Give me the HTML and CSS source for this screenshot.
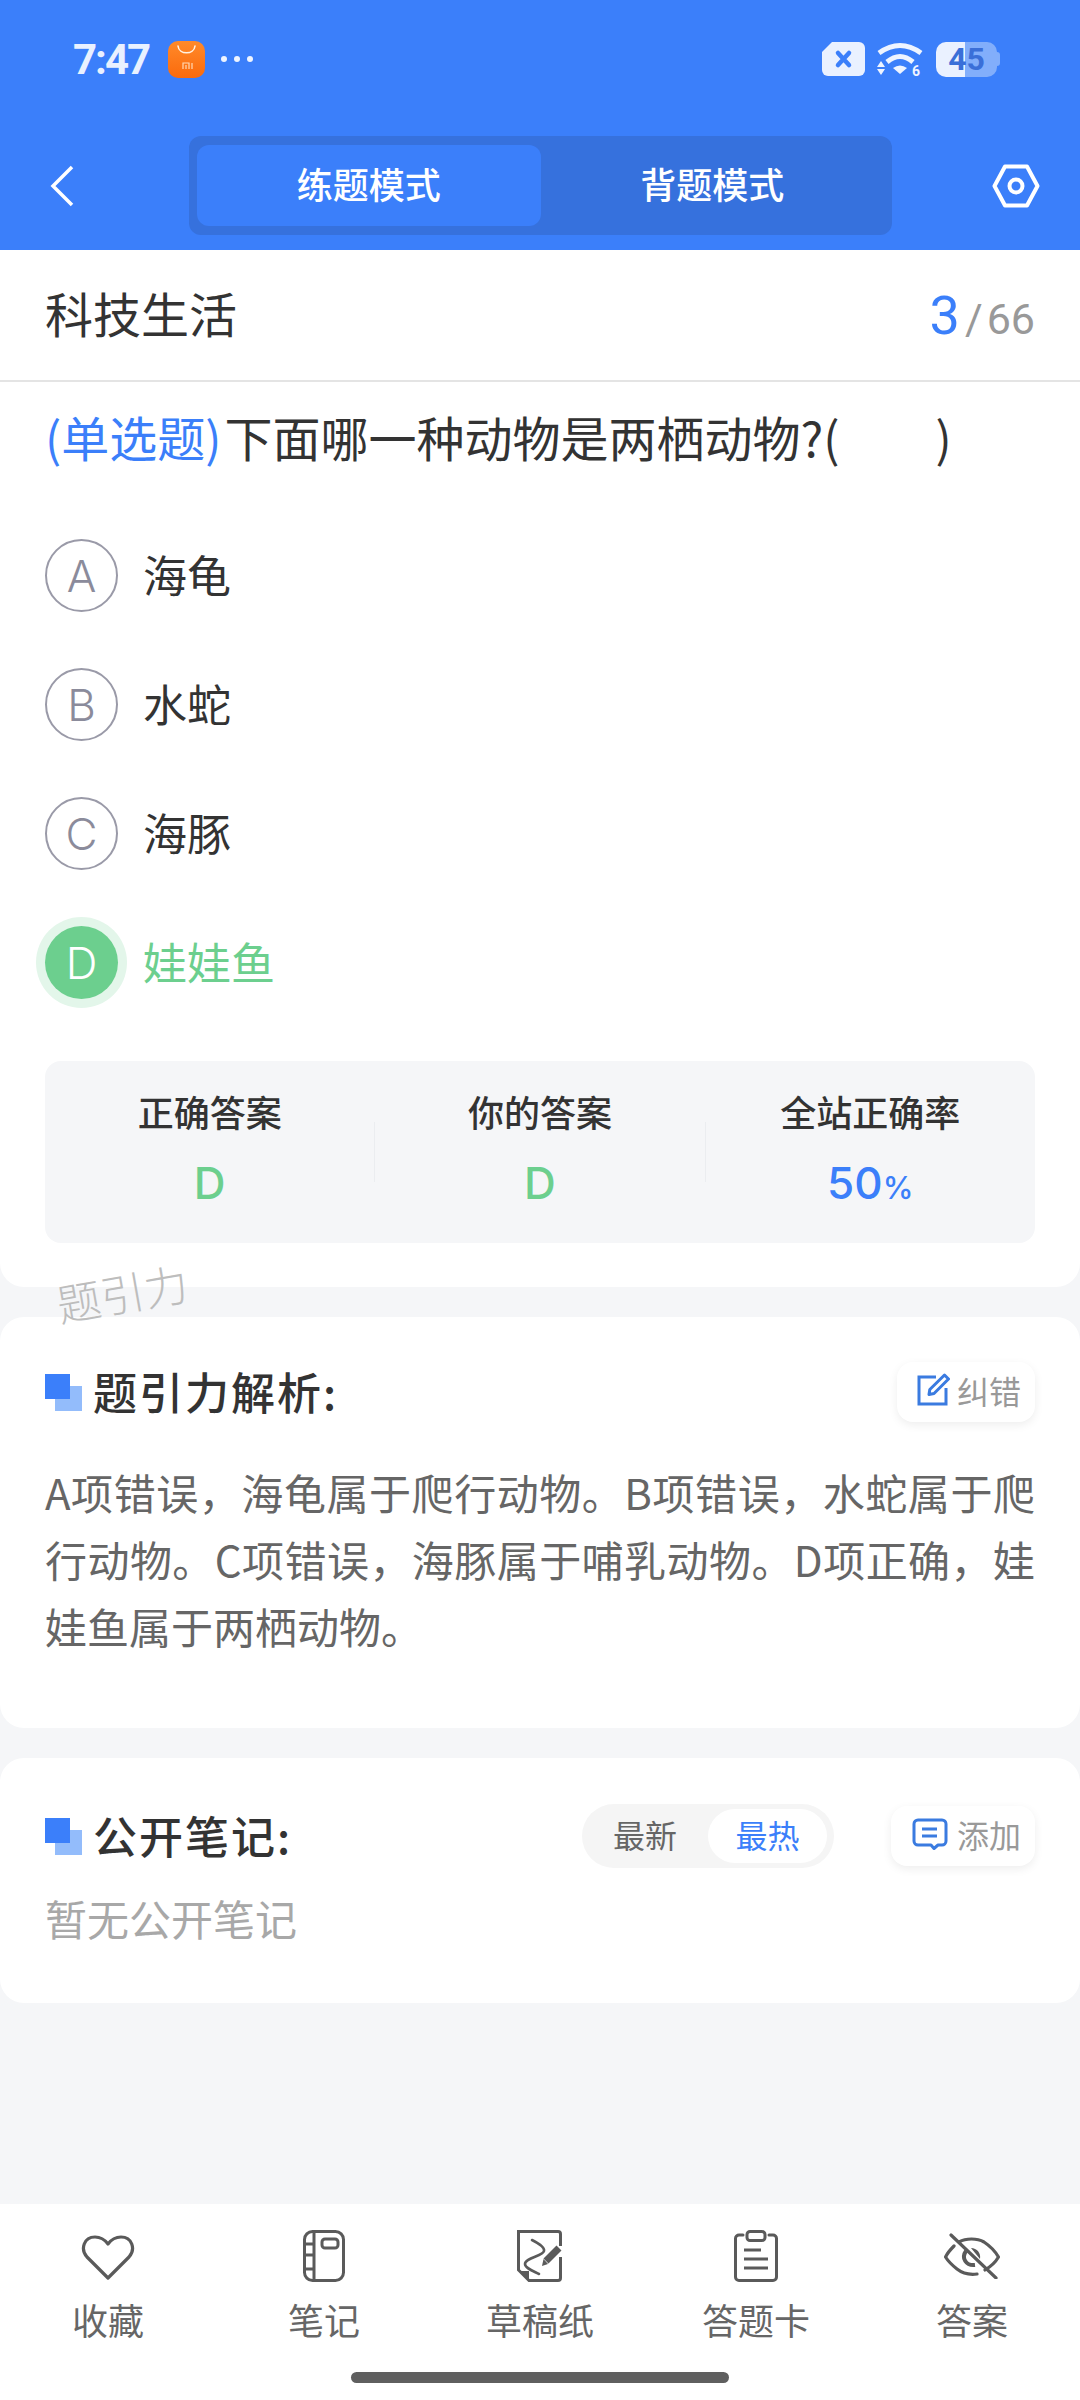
FILE: index.html
```html
<!DOCTYPE html>
<html lang="zh-CN">
<head>
  <meta charset="UTF-8">
  <meta name="viewport" content="width=device-width, initial-scale=1.0">
  <title>科技生活</title>
  <link rel="stylesheet" href="styles.css">
</head>
<body>
  <header class="top">
    <div class="status">
      <span class="time">7:47</span>
      <svg class="app-icon" width="37" height="37" viewBox="0 0 37 37">
        <defs>
          <linearGradient id="orange" x1="0" y1="0" x2="0" y2="1">
            <stop offset="0" stop-color="#ff8a2a"/>
            <stop offset="1" stop-color="#fb6a0c"/>
          </linearGradient>
        </defs>
        <rect width="37" height="37" rx="10" fill="url(#orange)"/>
        <path d="M10 5c1 9 16 9 17 0" fill="none" stroke="#fff3e4" stroke-width="1.6" stroke-linecap="round"/>
        <path d="M15 28v-6h6v6M18 24v4M24 22v6" fill="none" stroke="#ffd9b5" stroke-width="1.2"/>
      </svg>
      <span class="dots"><i></i><i></i><i></i></span>
      <span class="status-right">
        <svg width="43" height="34" viewBox="0 0 43 34">
          <path d="M10 0H37a6 6 0 0 1 6 6V28a6 6 0 0 1-6 6H6a6 6 0 0 1-6-6V10Z" fill="#eaf1ff"/>
          <path d="M16 11l11 12M27 11L16 23" stroke="#3b7ffa" stroke-width="4.5" stroke-linecap="round"/>
        </svg>
        <svg class="wifi" width="46" height="38" viewBox="0 0 46 38">
          <path d="M2 11Q23 -4 44 11" fill="none" stroke="#eef4ff" stroke-width="5"/>
          <path d="M10 20Q23 9 36 20" fill="none" stroke="#eef4ff" stroke-width="5"/>
          <path d="M16 26Q23 21 30 26L23 32Z" fill="#eef4ff"/>
          <path d="M0 25L4 19L8 25ZM0 27H8L4 33Z" fill="#eef4ff"/>
          <text x="35" y="34" class="wifi-six">6</text>
        </svg>
        <span class="battery-wrap">
          <span class="battery">45</span>
          <span class="battery-nub"></span>
        </span>
      </span>
    </div>
    <nav class="nav">
      <svg class="back" width="24" height="42" viewBox="0 0 24 42">
        <path d="M22 2L3 21L22 40" fill="none" stroke="#fff" stroke-width="3.5"/>
      </svg>
      <div class="seg">
        <div class="seg-tab active">练题模式</div>
        <div class="seg-tab">背题模式</div>
      </div>
      <svg class="gear" width="48" height="44" viewBox="0 0 48 44">
        <path d="M2.5 22L13 2.5H35L45.5 22L35 41.5H13Z" fill="none" stroke="#fff" stroke-width="4" stroke-linejoin="round"/>
        <circle cx="24" cy="22" r="6.5" fill="none" stroke="#fff" stroke-width="4"/>
      </svg>
    </nav>
  </header>

  <main class="content">
    <section class="card question-card">
      <div class="title-row">
        <span class="title">科技生活</span>
        <span class="progress"><b>3</b><em>/</em>66</span>
      </div>
      <div class="question"><span class="q-type">(单选题)</span>下面哪一种动物是两栖动物?(<span class="q-blank"></span>)</div>
      <div class="options">
        <div class="option"><span class="letter">A</span><span class="opt-text">海龟</span></div>
        <div class="option"><span class="letter">B</span><span class="opt-text">水蛇</span></div>
        <div class="option"><span class="letter">C</span><span class="opt-text">海豚</span></div>
        <div class="option right"><span class="letter">D</span><span class="opt-text">娃娃鱼</span></div>
      </div>
      <div class="stats">
        <div class="stat">
          <div class="stat-label">正确答案</div>
          <div class="stat-value green">D</div>
        </div>
        <div class="stat-sep"></div>
        <div class="stat">
          <div class="stat-label">你的答案</div>
          <div class="stat-value green">D</div>
        </div>
        <div class="stat-sep"></div>
        <div class="stat">
          <div class="stat-label">全站正确率</div>
          <div class="stat-value blue">50<small>%</small></div>
        </div>
      </div>
    </section>

    <div class="watermark">题引力</div>

    <section class="card block">
      <div class="block-head">
        <span class="mark"></span>
        <h2 class="block-title">题引力解析:</h2>
        <button class="mini-btn">
          <svg width="33" height="33" viewBox="0 0 33 33">
            <path d="M19 4H2V31H29V15" fill="none" stroke="#3a7be0" stroke-width="3"/>
            <path d="M27.500 2L31.500 6L17 20.500L12 21.500L12.800 16.500Z" fill="none" stroke="#3a7be0" stroke-width="3" stroke-linejoin="round"/>
          </svg>
          纠错
        </button>
      </div>
      <p class="analysis">A项错误，海龟属于爬行动物。B项错误，水蛇属于爬行动物。C项错误，海豚属于哺乳动物。D项正确，娃娃鱼属于两栖动物。</p>
    </section>

    <section class="card block notes">
      <div class="block-head">
        <span class="mark"></span>
        <h2 class="block-title">公开笔记:</h2>
        <div class="sort">
          <span class="sort-item">最新</span>
          <span class="sort-item on">最热</span>
        </div>
        <button class="mini-btn add">
          <svg width="36" height="32" viewBox="0 0 36 32">
            <path d="M6 2H30a4 4 0 0 1 4 4V23a4 4 0 0 1-4 4H26L22 30.500L19 27H6a4 4 0 0 1-4-4V6a4 4 0 0 1 4-4Z" fill="none" stroke="#3a7be0" stroke-width="3" stroke-linejoin="round"/>
            <path d="M10 11H25M10 18H25" stroke="#3a7be0" stroke-width="3"/>
          </svg>
          添加
        </button>
      </div>
      <p class="empty">暂无公开笔记</p>
    </section>
  </main>

  <footer class="tabbar">
    <div class="tabs">
      <div class="tab">
        <div class="tab-icon">
          <svg class="heart" width="54" height="46" viewBox="0 0 54 46">
            <path d="M27 43L6 22C-1 14 3 2 14 2C20 2 24 5 27 9C30 5 34 2 40 2C51 2 55 14 48 22Z" fill="none" stroke="#5a5a5a" stroke-width="3.200" stroke-linejoin="round"/>
          </svg>
        </div>
        收藏
      </div>
      <div class="tab">
        <div class="tab-icon">
          <svg width="42" height="52" viewBox="0 0 42 52">
            <rect x="1.500" y="1.500" width="39" height="49" rx="8" fill="none" stroke="#5a5a5a" stroke-width="3"/>
            <path d="M11 2V50M2 14H11M2 25H11M2 39H11" fill="none" stroke="#5a5a5a" stroke-width="3"/>
            <rect x="19" y="9" width="16" height="9" rx="3" fill="none" stroke="#5a5a5a" stroke-width="3"/>
          </svg>
        </div>
        笔记
      </div>
      <div class="tab">
        <div class="tab-icon">
          <svg width="46" height="52" viewBox="0 0 46 52">
            <path d="M43.500 16V4a2.500 2.500 0 0 0-2.500-2.500H1.500V40L12 50.500H41a2.500 2.500 0 0 0 2.500-2.500V27" fill="none" stroke="#5a5a5a" stroke-width="3"/>
            <path d="M2 41H12V50Z" fill="#5a5a5a"/>
            <path d="M15 10C21 13 28 17 27 21C26 26 8 28 8 34C8 38 16 41 22 44" fill="none" stroke="#5a5a5a" stroke-width="2.600" stroke-linecap="round"/>
            <path d="M42 18L29 31" stroke="#5a5a5a" stroke-width="7"/>
            <path d="M26.500 29L31 34L25 36Z" fill="#5a5a5a"/>
          </svg>
        </div>
        草稿纸
      </div>
      <div class="tab">
        <div class="tab-icon">
          <svg width="44" height="52" viewBox="0 0 44 52">
            <path d="M9 5H5a3.500 3.500 0 0 0-3.500 3.500V47a3.500 3.500 0 0 0 3.500 3.500H39a3.500 3.500 0 0 0 3.500-3.500V8.500A3.500 3.500 0 0 0 39 5H35" fill="none" stroke="#5a5a5a" stroke-width="3" stroke-linecap="round"/>
            <rect x="13" y="1.500" width="18" height="9" rx="3" fill="none" stroke="#5a5a5a" stroke-width="3"/>
            <path d="M10 20H27M10 29H34M10 38H34" stroke="#5a5a5a" stroke-width="3"/>
          </svg>
        </div>
        答题卡
      </div>
      <div class="tab">
        <div class="tab-icon">
          <svg width="56" height="46" viewBox="0 0 56 46">
            <path d="M15 9C22 5 33 5 40 9C46 13 51 18 54.500 24C51 30 46 34 41 37M33 41C25 42 18 40 13 36C8 32 4 28 1.500 24C4 19 7 16 10 13" fill="none" stroke="#5a5a5a" stroke-width="3.200" stroke-linecap="round"/>
            <path d="M7 2L52 45" stroke="#5a5a5a" stroke-width="3.200" stroke-linecap="round"/>
            <path d="M22 18C17 25 22 33 31 32" fill="none" stroke="#5a5a5a" stroke-width="4"/>
            <path d="M27 15C33 15 37 20 36 26Z" fill="#5a5a5a"/>
          </svg>
        </div>
        答案
      </div>
    </div>
    <div class="home-bar"></div>
  </footer>
</body>
</html>
```

FILE: styles.css
```css
* {
  box-sizing: border-box;
}
body {
  margin: 0;
  width: 1080px;
  height: 2400px;
  display: flex;
  flex-direction: column;
  background-color: #f5f6f8;
  font-family: "Noto Sans CJK SC", "Noto Sans", sans-serif;
  color: #333;
  overflow: hidden;
}

/* blue top area */
.top {
  height: 250px;
  background-color: #3b7ffa;
}
.status {
  height: 118px;
  padding: 0 80px 0 73px;
  display: flex;
  align-items: center;
}
.time {
  font-family: Roboto, sans-serif;
  font-weight: 700;
  font-size: 42px;
  letter-spacing: -2px;
  color: #e9f1ff;
  width: 95px;
}
.app-icon {
  display: block;
}
.dots {
  display: flex;
  gap: 7px;
  margin-left: 16px;
}
.dots i {
  width: 6px;
  height: 6px;
  border-radius: 50%;
  background-color: #eef4ff;
}
.status-right {
  margin-left: auto;
  display: flex;
  align-items: center;
  gap: 12px;
}
.status-right svg {
  display: block;
}
.status-right .wifi {
  margin-top: 3px;
}
.wifi-six {
  font-family: Roboto, sans-serif;
  font-weight: 700;
  font-size: 14px;
  fill: #eef4ff;
}
.battery-wrap {
  display: flex;
  align-items: center;
  margin-left: 1px;
}
.battery {
  width: 61px;
  height: 35px;
  border-radius: 10px;
  background: linear-gradient(90deg, #eaf1ff 29px, #82aefb 29px);
  color: #3a6fd8;
  font-family: Roboto, sans-serif;
  font-weight: 700;
  font-size: 32px;
  line-height: 35px;
  text-align: center;
}
.battery-nub {
  width: 3px;
  height: 14px;
  border-radius: 0 3px 3px 0;
  background-color: #82aefb;
}
.nav {
  margin-top: 18px;
  height: 99px;
  padding: 0 40px 0 50px;
  display: flex;
  align-items: center;
}
.back {
  display: block;
  margin-right: 115px;
}
.gear {
  display: block;
  margin-left: auto;
}
.seg {
  width: 703px;
  height: 99px;
  padding: 9px 8px;
  display: flex;
  background-color: #3671dd;
  border-radius: 12px;
}
.seg-tab {
  flex: 1;
  padding-bottom: 4px;
  text-align: center;
  font-size: 36px;
  font-weight: 500;
  line-height: 76px;
  color: #fff;
  border-radius: 12px;
}
.seg-tab.active {
  background-color: #3b7ffa;
}

/* cards */
.content {
  flex: 1;
  position: relative;
}
.card {
  background-color: #fff;
  border-radius: 24px;
}
.question-card {
  border-radius: 0 0 24px 24px;
  padding-bottom: 44px;
}
.title-row {
  height: 132px;
  padding: 0 45px;
  display: flex;
  align-items: center;
  justify-content: space-between;
  border-bottom: 2px solid #e4e4e4;
}
.title {
  font-size: 48px;
  margin-bottom: 6px;
}
.progress {
  font-family: Roboto, sans-serif;
  font-size: 43px;
  color: #999;
  display: flex;
  align-items: baseline;
}
.progress b {
  font-weight: 400;
  font-size: 54px;
  color: #3b7ffa;
}
.progress em {
  font-style: normal;
  margin: 0 4px 0 5px;
}
.question {
  margin-top: 21px;
  padding: 0 45px;
  font-size: 48px;
  line-height: 66px;
}
.q-type {
  color: #3b7ffa;
  margin-right: 3px;
}
.q-blank {
  display: inline-block;
  width: 96px;
}
.options {
  margin-top: 42px;
  padding: 0 45px;
}
.option {
  height: 129px;
  display: flex;
  align-items: center;
  font-size: 44px;
}
.opt-text {
  margin-bottom: 4px;
}
.letter {
  width: 73px;
  height: 73px;
  margin-right: 25px;
  border: 2px solid #9a9aa8;
  border-radius: 50%;
  display: flex;
  align-items: center;
  justify-content: center;
  font-family: Inter, sans-serif;
  font-weight: 300;
  font-size: 44px;
  color: #8b8b9b;
}
.option.right {
  color: #6ccf8e;
}
.option.right .letter {
  border: none;
  background-color: #6ccf8e;
  color: #fff;
  box-shadow: 0 0 0 9px #e3f6ea;
}
.stats {
  margin: 34px 45px 0;
  height: 182px;
  display: flex;
  background-color: #f5f6f8;
  border-radius: 16px;
}
.stat {
  flex: 1;
  padding-top: 25px;
  text-align: center;
}
.stat-sep {
  width: 1px;
  height: 60px;
  margin-top: 61px;
  background-color: #ebedf0;
}
.stat-label {
  font-size: 36px;
  font-weight: 500;
  line-height: 50px;
}
.stat-value {
  margin-top: 17px;
  font-family: Inter, sans-serif;
  font-weight: 500;
  font-size: 44px;
  line-height: 60px;
}
.stat-value small {
  font-size: 31px;
}
.green {
  color: #6ccf8e;
}
.blue {
  color: #3b7ffa;
}
.watermark {
  position: absolute;
  left: 56px;
  top: 1013px;
  font-size: 44px;
  font-weight: 300;
  line-height: 58px;
  color: #bdbdbd;
  transform: rotate(-10deg);
}
.block {
  margin-top: 30px;
  padding: 45px 45px 69px;
}
.block-head {
  height: 60px;
  display: flex;
  align-items: center;
}
.mark {
  width: 37px;
  height: 37px;
  margin-right: 11px;
  background:
    linear-gradient(#3b7ffa, #3b7ffa) 0 0 / 25px 25px no-repeat,
    linear-gradient(#93bcfb, #93bcfb) 10px 12px / 27px 25px no-repeat;
}
.block-title {
  margin: 0 0 3px;
  font-size: 44px;
  font-weight: 500;
  letter-spacing: 2px;
}
.mini-btn {
  margin-left: auto;
  height: 60px;
  padding: 0 14px 5px 20px;
  display: flex;
  align-items: center;
  gap: 7px;
  border: none;
  border-radius: 16px;
  background-color: #fff;
  box-shadow: 0 3px 10px rgba(0, 0, 0, 0.07);
  font-family: inherit;
  font-size: 32px;
  color: #999;
}
.analysis {
  margin: 36px 0 0;
  font-size: 42px;
  line-height: 67px;
  color: #666;
  text-align: justify;
}
.notes {
  padding: 46px 45px 55px;
}
.notes .block-head {
  height: 64px;
}
.sort {
  margin-left: auto;
  width: 252px;
  height: 64px;
  padding: 5px 7px 5px 0;
  display: flex;
  background-color: #f5f5f5;
  border-radius: 32px;
  font-size: 32px;
}
.sort-item {
  flex: 1;
  padding-bottom: 4px;
  text-align: center;
  line-height: 50px;
  color: #666;
}
.sort-item.on {
  flex: none;
  width: 119px;
  background-color: #fff;
  border-radius: 27px;
  color: #3b7ffa;
}
.add {
  margin-left: 57px;
  gap: 9px;
  padding-left: 21px;
}
.empty {
  margin: 20px 0 0;
  font-size: 42px;
  line-height: 60px;
  color: #a8a8a8;
}

/* bottom bar */
.tabbar {
  height: 196px;
  padding-top: 25px;
  background-color: #fff;
}
.tabs {
  display: flex;
}
.tab {
  flex: 1;
  text-align: center;
  font-size: 36px;
  line-height: 44px;
  color: #666;
}
.tab-icon {
  height: 54px;
  margin-bottom: 14px;
  display: flex;
  align-items: center;
  justify-content: center;
}
.heart {
  margin-top: 3px;
}
.home-bar {
  width: 378px;
  height: 11px;
  margin: 31px auto 0;
  border-radius: 6px;
  background-color: #5f5f5f;
}
```
